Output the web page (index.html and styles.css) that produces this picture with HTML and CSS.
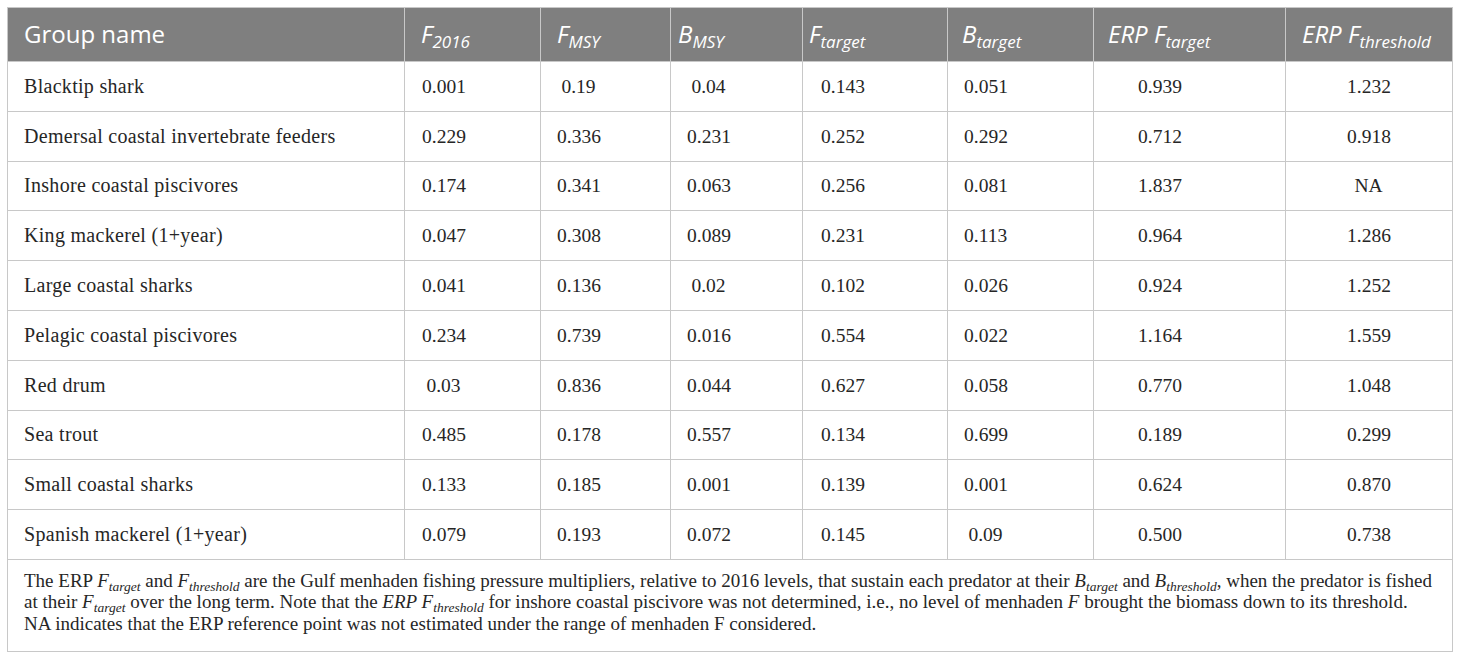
FILE: index.html
```html
<!DOCTYPE html>
<html lang="en">
<head>
    <meta charset="UTF-8">
    <title>ERP reference points</title>
    <link rel="stylesheet" href="styles.css">
</head>
<body>
    <table class="erp">
        <colgroup>
            <col class="w1"><col class="w2"><col class="w3"><col class="w4">
            <col class="w5"><col class="w6"><col class="w7"><col class="w8">
        </colgroup>
        <thead>
            <tr>
                <th class="h1">Group name</th>
                <th class="h2"><i>F</i><sub>2016</sub></th>
                <th class="h3"><i>F</i><sub>MSY</sub></th>
                <th class="h4"><i>B</i><sub>MSY</sub></th>
                <th class="h5"><i>F</i><sub>target</sub></th>
                <th class="h6"><i>B</i><sub>target</sub></th>
                <th class="h7"><i>ERP F</i><sub>target</sub></th>
                <th class="h8"><i>ERP F</i><sub>threshold</sub></th>
            </tr>
        </thead>
        <tbody>
            <tr>
                <td class="name">Blacktip shark</td>
                <td class="n2"><span>0.001</span></td><td class="n3"><span>0.19</span></td><td class="n4"><span>0.04</span></td>
                <td class="n5"><span>0.143</span></td><td class="n6"><span>0.051</span></td><td class="n7"><span>0.939</span></td><td class="n8"><span>1.232</span></td>
            </tr>
            <tr>
                <td class="name">Demersal coastal invertebrate feeders</td>
                <td class="n2"><span>0.229</span></td><td class="n3"><span>0.336</span></td><td class="n4"><span>0.231</span></td>
                <td class="n5"><span>0.252</span></td><td class="n6"><span>0.292</span></td><td class="n7"><span>0.712</span></td><td class="n8"><span>0.918</span></td>
            </tr>
            <tr>
                <td class="name">Inshore coastal piscivores</td>
                <td class="n2"><span>0.174</span></td><td class="n3"><span>0.341</span></td><td class="n4"><span>0.063</span></td>
                <td class="n5"><span>0.256</span></td><td class="n6"><span>0.081</span></td><td class="n7"><span>1.837</span></td><td class="n8"><span>NA</span></td>
            </tr>
            <tr>
                <td class="name">King mackerel (1+year)</td>
                <td class="n2"><span>0.047</span></td><td class="n3"><span>0.308</span></td><td class="n4"><span>0.089</span></td>
                <td class="n5"><span>0.231</span></td><td class="n6"><span>0.113</span></td><td class="n7"><span>0.964</span></td><td class="n8"><span>1.286</span></td>
            </tr>
            <tr>
                <td class="name">Large coastal sharks</td>
                <td class="n2"><span>0.041</span></td><td class="n3"><span>0.136</span></td><td class="n4"><span>0.02</span></td>
                <td class="n5"><span>0.102</span></td><td class="n6"><span>0.026</span></td><td class="n7"><span>0.924</span></td><td class="n8"><span>1.252</span></td>
            </tr>
            <tr>
                <td class="name">Pelagic coastal piscivores</td>
                <td class="n2"><span>0.234</span></td><td class="n3"><span>0.739</span></td><td class="n4"><span>0.016</span></td>
                <td class="n5"><span>0.554</span></td><td class="n6"><span>0.022</span></td><td class="n7"><span>1.164</span></td><td class="n8"><span>1.559</span></td>
            </tr>
            <tr>
                <td class="name">Red drum</td>
                <td class="n2"><span>0.03</span></td><td class="n3"><span>0.836</span></td><td class="n4"><span>0.044</span></td>
                <td class="n5"><span>0.627</span></td><td class="n6"><span>0.058</span></td><td class="n7"><span>0.770</span></td><td class="n8"><span>1.048</span></td>
            </tr>
            <tr>
                <td class="name">Sea trout</td>
                <td class="n2"><span>0.485</span></td><td class="n3"><span>0.178</span></td><td class="n4"><span>0.557</span></td>
                <td class="n5"><span>0.134</span></td><td class="n6"><span>0.699</span></td><td class="n7"><span>0.189</span></td><td class="n8"><span>0.299</span></td>
            </tr>
            <tr>
                <td class="name">Small coastal sharks</td>
                <td class="n2"><span>0.133</span></td><td class="n3"><span>0.185</span></td><td class="n4"><span>0.001</span></td>
                <td class="n5"><span>0.139</span></td><td class="n6"><span>0.001</span></td><td class="n7"><span>0.624</span></td><td class="n8"><span>0.870</span></td>
            </tr>
            <tr>
                <td class="name">Spanish mackerel (1+year)</td>
                <td class="n2"><span>0.079</span></td><td class="n3"><span>0.193</span></td><td class="n4"><span>0.072</span></td>
                <td class="n5"><span>0.145</span></td><td class="n6"><span>0.09</span></td><td class="n7"><span>0.500</span></td><td class="n8"><span>0.738</span></td>
            </tr>
        </tbody>
        <tfoot>
            <tr>
                <td colspan="8" class="note">
                    The ERP <i>F</i><sub>target</sub> and <i>F</i><sub>threshold</sub> are the Gulf menhaden fishing pressure multipliers, relative to 2016 levels, that sustain each predator at their <i>B</i><sub>target</sub> and <i>B</i><sub>threshold</sub>, when the predator is fished<br>
                    at their <i>F</i><sub>target</sub> over the long term. Note that the <i>ERP F</i><sub>threshold</sub> for inshore coastal piscivore was not determined, i.e., no level of menhaden <i>F</i> brought the biomass down to its threshold.<br>
                    NA indicates that the ERP reference point was not estimated under the range of menhaden F considered.
                </td>
            </tr>
        </tfoot>
    </table>
</body>
</html>
```

FILE: styles.css
```css
body {
    margin: 0;
    padding: 7px;
    background: #fff;
}
.erp {
    width: 1445px;
    border-collapse: collapse;
    table-layout: fixed;
    border: 1px solid #c8c8c8;
    font-family: "Liberation Serif", serif;
    color: #262626;
}
.w1 { width: 397px; }
.w2 { width: 136px; }
.w3 { width: 130px; }
.w4 { width: 132px; }
.w5 { width: 145px; }
.w6 { width: 146px; }
.w7 { width: 192px; }
.w8 { width: 167px; }

/* header */
th {
    background-color: #7f7f7f;
    color: #fff;
    font-family: "Open Sans", sans-serif;
    font-weight: normal;
    font-size: 24px;
    text-align: left;
    height: 51px;
    padding: 0 0 2px 16px;
    border-left: 1px solid #c8c8c8;
    white-space: nowrap;
}
th sub {
    font-size: 17px;
    font-style: italic;
    vertical-align: -5px;
    line-height: 0;
}
.h4 { padding-left: 7px; }
.h5 { padding-left: 6px; }
.h6 { padding-left: 14px; }
.h7 { padding-left: 14px; }

/* body rows */
td {
    height: 48.8px;
    padding: 0 0 0 16px;
    border: 1px solid #c8c8c8;
    font-size: 20px;
    vertical-align: middle;
}
.name {
    letter-spacing: 0.3px;
}
td span {
    display: inline-block;
    width: 43px;
    text-align: center;
    font-size: 19.5px;
}
.n2 { padding-left: 17px; }
.n3 { padding-left: 16px; }
.n4 { padding-left: 16px; }
.n5 { padding-left: 18px; }
.n6 { padding-left: 16px; }
.n7 { padding-left: 44px; }
.n8 { padding-left: 61px; }

/* footnote */
.note {
    height: auto;
    padding: 10px 16px 17px;
    font-size: 19px;
    line-height: 21.5px;
    white-space: nowrap;
}
.note sub {
    font-size: 13.5px;
    font-style: italic;
    line-height: 0;
    vertical-align: -4px;
}
```
